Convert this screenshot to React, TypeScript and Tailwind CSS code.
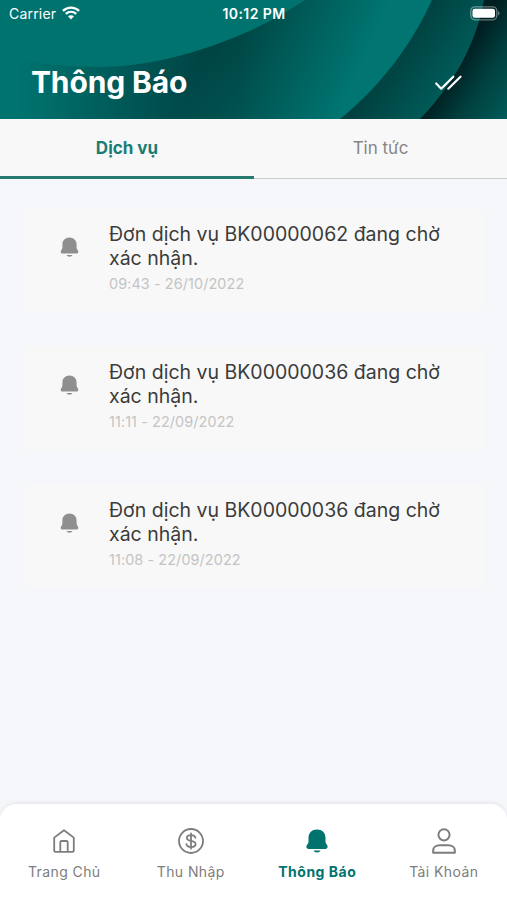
import clsx from 'clsx'
import type { ReactNode } from 'react'

const NOTIFICATIONS = [
  { id: 1, title: 'Đơn dịch vụ BK00000062 đang chờ xác nhận.', time: '09:43 - 26/10/2022' },
  { id: 2, title: 'Đơn dịch vụ BK00000036 đang chờ xác nhận.', time: '11:11 - 22/09/2022' },
  { id: 3, title: 'Đơn dịch vụ BK00000036 đang chờ xác nhận.', time: '11:08 - 22/09/2022' },
]

function BellIcon({ className }: { className?: string }) {
  return (
    <svg viewBox="0 0 22 24" fill="currentColor" className={className}>
      <path d="M11 .5C6 .5 2.500 4 2.500 8.700v4c0 1-.4 1.700-1 2.600-.6.8-1.100 1.500-1.100 2.500 0 1.300.9 2.100 2.200 2.100h16.800c1.300 0 2.200-.8 2.200-2.100 0-1-.5-1.700-1.100-2.500-.6-.9-1-1.600-1-2.600v-4C19.500 4 16 .5 11 .5Z" />
      <path d="M7.500 21.600h7c-.5 1.300-1.800 2-3.500 2s-3-.7-3.500-2Z" />
    </svg>
  )
}

function HomeIcon() {
  return (
    <svg width="22" height="24" viewBox="0 0 22 24" fill="none" stroke="currentColor" strokeWidth="1.800" strokeLinejoin="round">
      <path d="M1.200 8.600 11 1.200l9.800 7.400v12.600c0 1-.6 1.600-1.600 1.600H2.800c-1 0-1.600-.6-1.600-1.600Z" />
      <path d="M7.300 22.500V13.200c0-.8.5-1.200 1.200-1.200h5c.7 0 1.200.4 1.200 1.200v9.300" />
    </svg>
  )
}

function MoneyIcon() {
  return (
    <svg width="26" height="26" viewBox="0 0 26 26" fill="none" stroke="currentColor" strokeWidth="1.800" strokeLinecap="round">
      <circle cx="13" cy="13" r="12" />
      <path d="M17.400 9.800c-.3-1.700-1.900-2.700-4.400-2.700s-4.200 1-4.200 2.900c0 4 8.800 1.900 8.800 6 0 1.900-1.800 3-4.500 3-2.600 0-4.400-1.100-4.700-2.900M13 5.500v15" />
    </svg>
  )
}

function UserIcon() {
  return (
    <svg width="24" height="26" viewBox="0 0 24 26" fill="none" stroke="currentColor" strokeWidth="2" strokeLinejoin="round">
      <circle cx="12" cy="6.800" r="5.600" />
      <path d="M1.200 24.800v-2.300c0-3.300 3.200-5.200 6.600-5.200h8.400c3.400 0 6.600 1.900 6.600 5.200v2.300Z" />
    </svg>
  )
}

// Layered teal discs, each one casting a shadow on the layer below it
function HeaderArt() {
  return (
    <svg className="absolute inset-0" width="507" height="119" viewBox="0 0 507 119" preserveAspectRatio="none">
      <defs>
        <linearGradient id="base" gradientUnits="userSpaceOnUse" x1="210" y1="34" x2="348" y2="96">
          <stop offset="0" stopColor="#003b3c" />
          <stop offset="0.45" stopColor="#005753" />
          <stop offset="1" stopColor="#007572" />
        </linearGradient>
        <linearGradient id="fade" gradientUnits="userSpaceOnUse" x1="0" y1="0" x2="240" y2="0">
          <stop offset="0.08" stopColor="#00736f" />
          <stop offset="1" stopColor="#00736f" stopOpacity="0" />
        </linearGradient>
        <linearGradient id="mid" gradientUnits="userSpaceOnUse" x1="390" y1="55" x2="450" y2="96">
          <stop offset="0" stopColor="#00403f" />
          <stop offset="1" stopColor="#005e5b" />
        </linearGradient>
        <linearGradient id="deep" gradientUnits="userSpaceOnUse" x1="461" y1="56" x2="522" y2="96">
          <stop offset="0" stopColor="#001e20" />
          <stop offset="0.45" stopColor="#00403f" />
          <stop offset="1" stopColor="#005c59" />
        </linearGradient>
      </defs>
      <rect width="507" height="119" fill="url(#base)" />
      <rect width="300" height="119" fill="url(#fade)" />
      <path d="M0 0H305Q282 15 254 29 170 67 98 67 50 67 0 56Z" fill="#00736f" />
      <path d="M432 0C412 44 381 86 340 119H507V0Z" fill="url(#mid)" />
      <path d="M484 0C476 44 454 84 420 119H507V0Z" fill="url(#deep)" />
    </svg>
  )
}

function StatusBar() {
  return (
    <div className="relative grid h-[27px] grid-cols-3 items-center pl-[9px] pr-[7px] text-white">
      <div className="flex items-center gap-[6px] text-[14px] tracking-[0.2px]">
        Carrier
        <svg width="18" height="14" viewBox="0 0 19 14" fill="none" stroke="currentColor" strokeWidth="2.500" className="-mt-px">
          <path d="M1 4.700c4.800-4.500 12.200-4.500 17 0M4 8c3.200-2.900 7.800-2.900 11 0" />
          <path d="m6.300 10.500 3.200 3.300 3.200-3.300c-1.800-1.500-4.600-1.500-6.400 0Z" fill="currentColor" stroke="none" />
        </svg>
      </div>
      <div className="-ml-px text-center text-[14px] font-semibold tracking-[0.4px]">10:12 PM</div>
      <svg width="30" height="15" viewBox="0 0 30 15" className="justify-self-end">
        <rect x="0.800" y="0.800" width="26" height="13" rx="4" fill="none" stroke="#fff" strokeOpacity="0.400" strokeWidth="1.300" />
        <rect x="2.500" y="2.800" width="22.500" height="9" rx="2.300" fill="#fff" />
        <path d="M28.200 5v4.600c1.700-.8 1.700-3.800 0-4.600Z" fill="#fff" fillOpacity="0.500" />
      </svg>
    </div>
  )
}

function NavItem({ label, icon, active }: { label: string; icon: ReactNode; active?: boolean }) {
  return (
    <button
      className={clsx(
        'flex flex-col items-center whitespace-nowrap text-[14px]',
        active ? 'font-bold text-[#00736f] tracking-[0.5px]' : 'text-[#7d7d7d] tracking-[0.4px]',
      )}
    >
      <span className="flex h-[26px] items-center">{icon}</span>
      <span className="mt-[8px] leading-5">{label}</span>
    </button>
  )
}

export default function App() {
  return (
    <div className="flex h-[900px] w-[507px] flex-col overflow-hidden bg-[#f5f7fb] font-['Inter',sans-serif]">
      <header className="relative h-[119px] shrink-0">
        <HeaderArt />
        <StatusBar />
        <div className="relative flex items-center justify-between pl-[31px] pr-[44px] pt-[35px] text-white">
          <h1 className="text-[30px] font-bold leading-10 tracking-[-0.15px]">Thông Báo</h1>
          <svg width="29" height="17" viewBox="0 0 29 17" fill="none" stroke="currentColor" strokeWidth="2.200" strokeLinecap="round" strokeLinejoin="round">
            <path d="m2.200 9.500 5 5.200L19.300 2.700M14.300 14.700 26.500 2.700" />
          </svg>
        </div>
      </header>

      {/* Tabs */}
      <div className="flex h-[60px] shrink-0 bg-[#f8f8f8] text-[17px]">
        <button className="w-[254px] border-b-[3px] border-[#277a70] pt-0.5 font-bold text-[#1a7d74]">Dịch vụ</button>
        <button className="flex-1 border-b border-[#c9cdcf] text-[#858585]">Tin tức</button>
      </div>

      {/* Notification list */}
      <main className="flex flex-1 flex-col gap-[34px] px-6 pt-[29px]">
        {NOTIFICATIONS.map((n) => (
          <article key={n.id} className="flex h-[104px] rounded-sm bg-[#f8f8f8] pl-[36px] pt-[14px]">
            <BellIcon className="mt-[15px] h-5 w-[19px] shrink-0 text-[#8f8f8f]" />
            <div className="ml-[30px] w-[345px]">
              <p className="text-[19.5px] leading-6 text-[#3b3b3b]">{n.title}</p>
              <time className="mt-1 block text-[14.4px] leading-5 tracking-[0.1px] text-[#c4c4c4]">{n.time}</time>
            </div>
          </article>
        ))}
      </main>

      {/* Bottom navigation */}
      <nav className="grid h-[96px] shrink-0 grid-cols-4 items-start rounded-t-[16px] bg-white pl-px pt-[24px] shadow-[0_-1px_4px_rgba(0,0,0,0.08)]">
        <NavItem label="Trang Chủ" icon={<HomeIcon />} />
        <NavItem label="Thu Nhập" icon={<MoneyIcon />} />
        <NavItem label="Thông Báo" icon={<BellIcon className="h-6 w-[22px]" />} active />
        <NavItem label="Tài Khoản" icon={<UserIcon />} />
      </nav>
    </div>
  )
}
